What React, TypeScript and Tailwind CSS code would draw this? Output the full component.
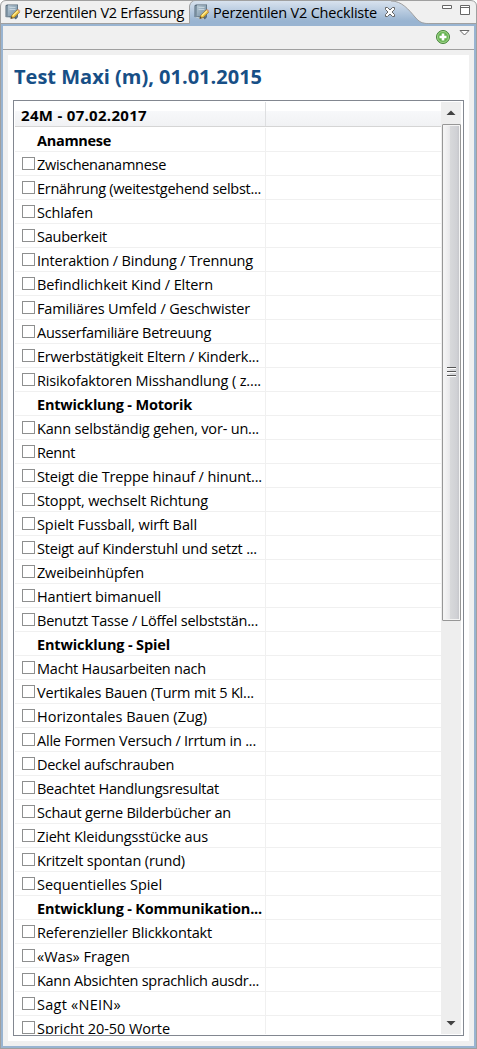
import React, { useLayoutEffect, useRef } from "react";

type Row = { text: string; width: number; heading?: boolean };

const rows: Row[] = [
  { text: "Anamnese", width: 74, heading: true },
  { text: "Zwischenanamnese", width: 129 },
  { text: "Ernährung (weitestgehend selbst...", width: 224 },
  { text: "Schlafen", width: 56 },
  { text: "Sauberkeit", width: 70 },
  { text: "Interaktion / Bindung / Trennung", width: 216 },
  { text: "Befindlichkeit Kind / Eltern", width: 176 },
  { text: "Familiäres Umfeld / Geschwister", width: 213 },
  { text: "Ausserfamiliäre Betreuung", width: 174 },
  { text: "Erwerbstätigkeit Eltern / Kinderk...", width: 222 },
  { text: "Risikofaktoren Misshandlung ( z....", width: 224 },
  { text: "Entwicklung - Motorik", width: 155, heading: true },
  { text: "Kann selbständig gehen, vor- un...", width: 222 },
  { text: "Rennt", width: 38 },
  { text: "Steigt die Treppe hinauf / hinunt...", width: 225 },
  { text: "Stoppt, wechselt Richtung", width: 171 },
  { text: "Spielt Fussball, wirft Ball", width: 160 },
  { text: "Steigt auf Kinderstuhl und setzt ...", width: 220 },
  { text: "Zweibeinhüpfen", width: 107 },
  { text: "Hantiert bimanuell", width: 124 },
  { text: "Benutzt Tasse / Löffel selbststän...", width: 221 },
  { text: "Entwicklung - Spiel", width: 133, heading: true },
  { text: "Macht Hausarbeiten nach", width: 169 },
  { text: "Vertikales Bauen (Turm mit 5 Kl...", width: 217 },
  { text: "Horizontales Bauen (Zug)", width: 170 },
  { text: "Alle Formen Versuch / Irrtum in ...", width: 219 },
  { text: "Deckel aufschrauben", width: 137 },
  { text: "Beachtet Handlungsresultat", width: 182 },
  { text: "Schaut gerne Bilderbücher an", width: 194 },
  { text: "Zieht Kleidungsstücke aus", width: 171 },
  { text: "Kritzelt spontan (rund)", width: 148 },
  { text: "Sequentielles Spiel", width: 125 },
  { text: "Entwicklung - Kommunikation...", width: 225, heading: true },
  { text: "Referenzieller Blickkontakt", width: 175 },
  { text: "«Was» Fragen", width: 93 },
  { text: "Kann Absichten sprachlich ausdr...", width: 222 },
  { text: "Sagt «NEIN»", width: 84 },
  { text: "Spricht 20-50 Worte", width: 133 },
];

// Spaces the letters so that the label takes exactly the given width.
function Label({ text, width, className = "" }: { text: string; width: number; className?: string }) {
  const ref = useRef<HTMLSpanElement>(null);
  useLayoutEffect(() => {
    const fit = () => {
      const el = ref.current;
      if (!el) return;
      el.style.letterSpacing = "0px";
      const natural = el.getBoundingClientRect().width;
      el.style.letterSpacing = `${(width - natural) / text.length}px`;
    };
    fit();
    document.fonts?.ready.then(fit);
  }, [text, width]);
  return (
    <span ref={ref} className={`inline-block shrink-0 whitespace-nowrap ${className}`}>
      {text}
    </span>
  );
}

function FormIcon() {
  return (
    <svg width="16" height="16" viewBox="0 0 16 16" className="block shrink-0">
      <defs>
        <linearGradient id="book" x1="0" y1="0" x2="1" y2="1">
          <stop offset="0" stopColor="#b9cad6" />
          <stop offset="1" stopColor="#6f8a9e" />
        </linearGradient>
      </defs>
      <path d="M.5 1.5 2 .5H13V13L11 15.3 .5 13Z" fill="#566878" />
      <path d="M3 1.2H12.3V12.4H3Z" fill="url(#book)" />
      <path d="M1.2 2V12.6L3 12V1.5Z" fill="#8095a5" />
      <path d="M4.5 3.5H10.5M4.5 5.5H10.5" stroke="#c5d3dc" strokeWidth="1" />
      <path d="M1.5 13 10 14.8" stroke="#dce4e8" strokeWidth=".8" />
      <path d="M5.8 14.6 6.9 11.3 12.4 5.8 14.8 8.1 9.2 13.6Z" fill="#efc23c" stroke="#8a6a2a" strokeWidth=".7" />
      <path d="M7.7 11.8 13.1 6.6" stroke="#fff09a" strokeWidth="1.2" />
      <path d="M12.4 5.8 13.4 4.9 15.5 7 14.6 8Z" fill="#d99a80" />
      <path d="M5.8 14.6 6.4 12.7 7.9 14Z" fill="#4b392b" />
    </svg>
  );
}

function Tabs() {
  return (
    <header className="relative h-[26px] shrink-0 overflow-hidden">
      <svg width="477" height="26" className="absolute inset-0">
        <defs>
          <linearGradient id="tab" x1="0" y1="0" x2="0" y2="1">
            <stop offset="0" stopColor="#d8e2ee" />
            <stop offset=".8" stopColor="#99b4d1" />
          </linearGradient>
        </defs>
        <path d="M0 26V5Q1 .5 6 .5H471Q476 .5 477 5V26Z" fill="#f0f0f0" />
        <path d="M1 23.5H189V26H1Z" fill="#99b4d1" />
        <path d="M189 26V6Q190 1 195 1H391C402 1 409 10 415 17S424 23 431 23H476V26Z" fill="url(#tab)" />
        <path d="M420 23.5H476V26H420Z" fill="#99b4d1" />
        <path d="M.5 26V6Q1 .5 6 .5H471Q476.5 1 476.5 6V26M1 23.5H189.5V6Q191 .5 195 .5M391 1C402 1 409 10 415 17S424 23.5 431 23.5H476" fill="none" stroke="#a0a0a0" />
      </svg>
      <div className="relative flex h-6 items-center pl-[5px] text-[14.5px] leading-6">
        <FormIcon />
        <div className="ml-[3px] mt-[2px] flex w-[165px] shrink-0">
          <Label text="Perzentilen V2 Erfassung" width={160} />
        </div>
        <div className="ml-[5px]"><FormIcon /></div>
        <div className="ml-[3px] mt-[2px] flex w-[168px] shrink-0">
          <Label text="Perzentilen V2 Checkliste" width={164} />
        </div>
        <svg width="12" height="12" viewBox="0 0 12 12" className="ml-[3px] shrink-0">
          <path d="M1.5 1.5H3.5L6 4 8.5 1.5H10.5V3.5L8 6 10.5 8.5V10.5H8.5L6 8 3.5 10.5H1.5V8.5L4 6 1.5 3.5Z" fill="#fff" stroke="#666" />
        </svg>
        <svg width="30" height="14" viewBox="0 0 30 14" className="absolute left-[441px] top-[3px]">
          <path d="M1.5 2.5H10.5V5.5H1.5ZM19.5 2.5H28.5V11.5H19.5ZM19.5 4.5H28.5" fill="#fff" stroke="#666" />
        </svg>
      </div>
    </header>
  );
}

function Scrollbar() {
  return (
    <aside className="flex w-[20px] shrink-0 flex-col items-end bg-[#eeeeee]">
      <svg width="19" height="22" viewBox="0 0 19 22" className="shrink-0">
        <path d="M4.5 13 9 8.5 13.5 13Z" fill="#424242" />
      </svg>
      <div className="flex h-[497px] w-[19px] shrink-0 items-center justify-center rounded-[1px] border border-[#979797] bg-[linear-gradient(90deg,#f7f7f7_0,#e9e9eb_38%,#d8d9db_42%,#d0d1d5_80%,#c2c3c7_100%)] shadow-[inset_0_0_0_1px_#f4f4f4]">
        <svg width="9" height="11" viewBox="0 0 9 11">
          <path d="M0 .5H9M0 4.5H9M0 8.5H9" stroke="#555" />
          <path d="M0 1.5H9M0 5.5H9M0 9.5H9" stroke="#fff" />
        </svg>
      </div>
      <div className="grow" />
      <svg width="19" height="20" viewBox="0 0 19 20" className="shrink-0">
        <path d="M4.5 7 9 11.5 13.5 7Z" fill="#424242" />
      </svg>
    </aside>
  );
}

export default function App() {
  return (
    <div className="flex h-[1049px] w-[477px] flex-col overflow-hidden bg-white font-['Open_Sans','Noto_Sans',sans-serif] text-black">
      <Tabs />
      <div className="flex min-h-0 grow flex-col border-x border-b border-[#a0a0a0]">
        <div className="flex min-h-0 grow flex-col border-x-2 border-b-2 border-[#99b4d1] bg-[#f0f0f0]">
          <div className="flex h-6 shrink-0 justify-end border-b border-[#a0a0a0] pr-[4px]">
            <svg width="16" height="16" viewBox="0 0 16 16" className="mt-[3px]">
              <circle cx="8" cy="8" r="6.5" fill="#65b451" stroke="#46863b" />
              <circle cx="8" cy="8" r="5.5" fill="none" stroke="#a5d38e" />
              <path d="M8 4.5V11.5M4.5 8H11.5" stroke="#fff" strokeWidth="2.6" />
            </svg>
            <svg width="11" height="7" viewBox="0 0 11 7" className="ml-[8px] mt-[3px]">
              <path d="M1 1.5H10L5.5 6Z" fill="#fff" stroke="#666" />
            </svg>
          </div>
          <main className="mx-[5px] mb-[5px] mt-[5px] flex min-h-0 grow flex-col bg-white px-[5px] pb-[5px]">
            <h1 className="flex h-[45px] shrink-0 pl-px pt-[8px] text-[20px] font-bold leading-[28px] text-[#174f86]">
              <Label text="Test Maxi (m), 01.01.2015" width={248} />
            </h1>
            <section className="flex min-h-0 grow overflow-hidden border border-[#828790] py-px pl-px pr-[2px]">
              <div className="flex min-w-0 grow flex-col overflow-hidden">
                <div className="flex h-[25px] shrink-0 border-b border-[#d5d5d5] bg-[linear-gradient(#fff_0_9px,#f7f8fa_9px,#f1f2f4)]">
                  <div className="flex w-[251px] shrink-0 border-r border-[#dedfe1] pl-[6px] text-[15px] font-bold leading-[27px]">
                    <Label text="24M - 07.02.2017" width={126} />
                  </div>
                </div>
                <ul className="min-h-0 grow overflow-hidden">
                  {rows.map((row, i) => (
                    <li key={row.text} className={i === 0 ? "flex h-[25px] border-b border-[#f0f0f0] pt-px" : "flex h-6 border-b border-[#f0f0f0]"}>
                      <div className="flex w-[251px] shrink-0 border-r border-[#f0f0f0] pl-[7px] text-[14.5px] leading-[24px]">
                        {row.heading ? (
                          <span className="w-[13px] shrink-0" />
                        ) : (
                          <span className="mt-[5px] size-[13px] shrink-0 border border-[#8e8f8f] bg-white" />
                        )}
                        <Label
                          text={row.text}
                          width={row.width}
                          className={row.heading ? "ml-[2px] mt-px h-[22px] font-bold" : "ml-[2px] mt-px h-[22px]"}
                        />
                      </div>
                    </li>
                  ))}
                </ul>
              </div>
              <Scrollbar />
            </section>
          </main>
        </div>
      </div>
    </div>
  );
}
